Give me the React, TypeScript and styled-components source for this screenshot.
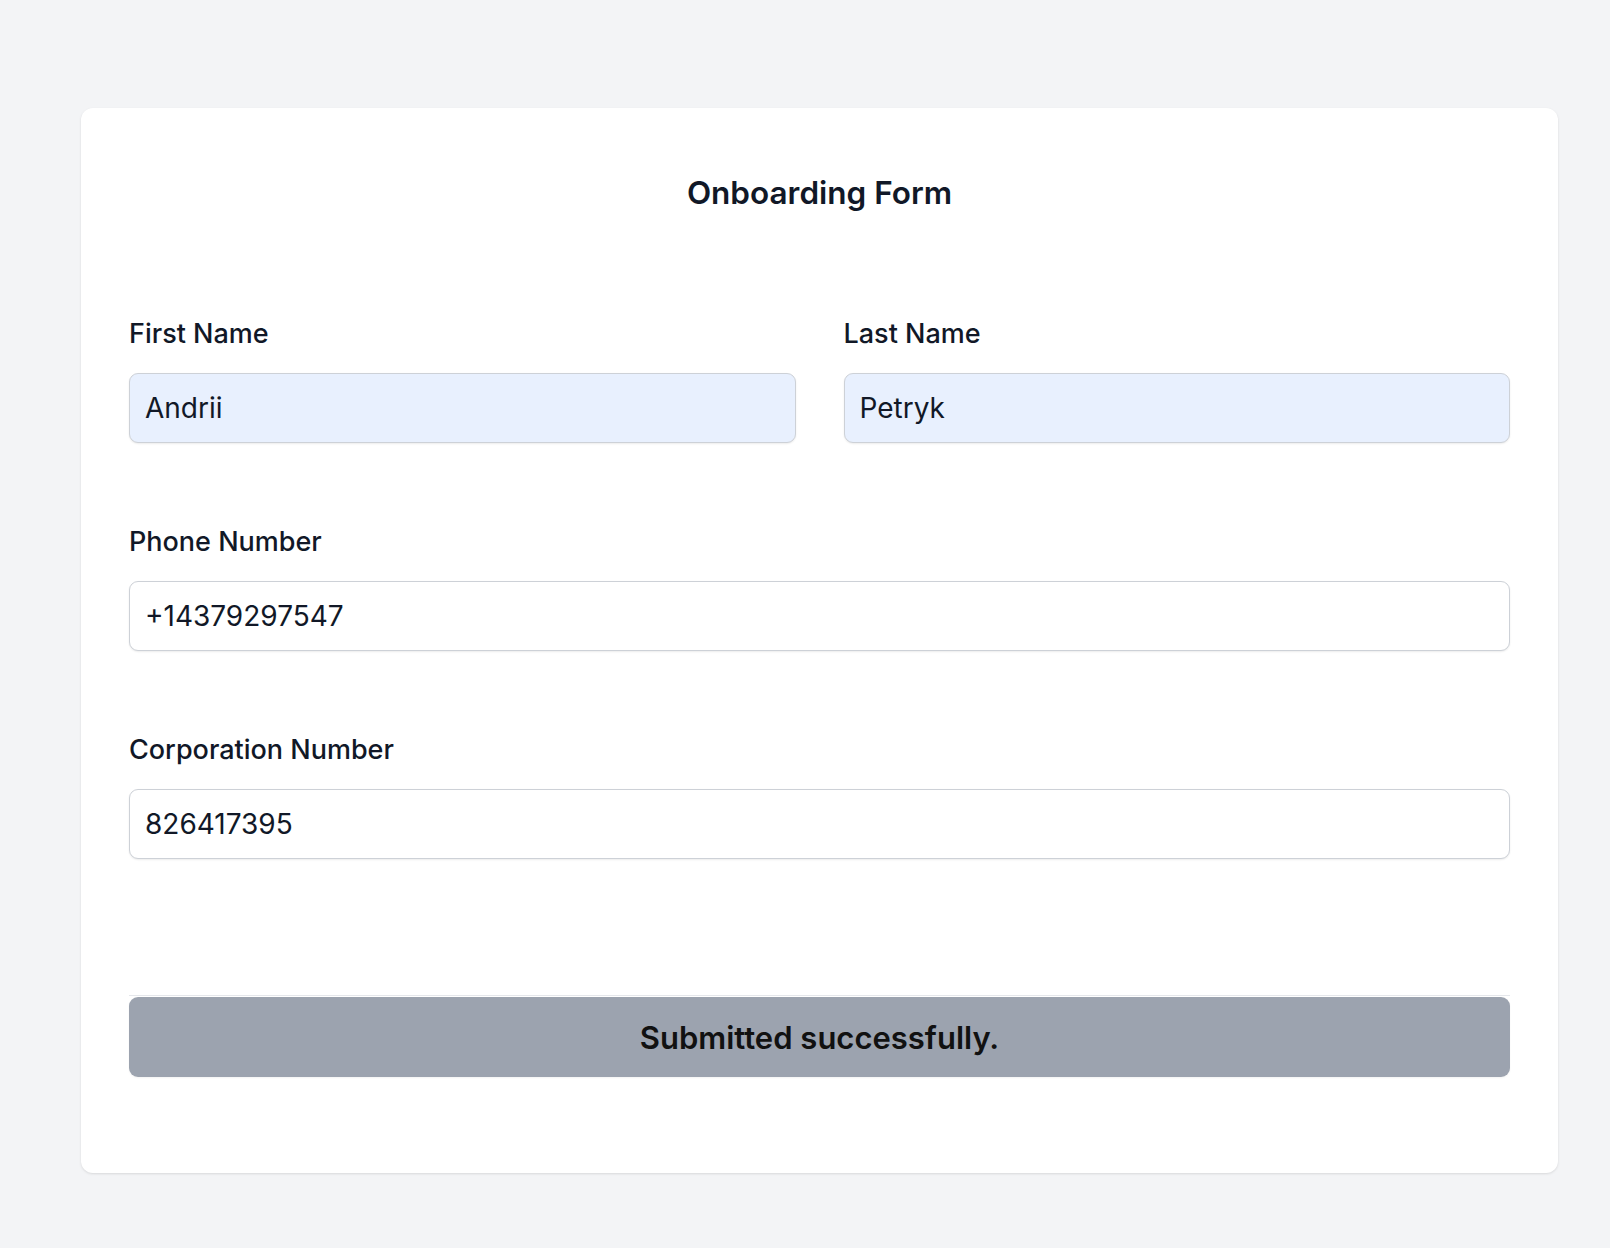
import React from "react";
import styled, { createGlobalStyle } from "styled-components";

const GlobalStyle = createGlobalStyle`
  html, body {
    margin: 0;
    padding: 0;
    background: #f3f4f6;
    font-family: Inter, "Noto Sans", "Liberation Sans", sans-serif;
    color: #111827;
  }
  #root {
    min-height: 100vh;
  }
  * { box-sizing: border-box; }
`;

const Page = styled.div`
  min-height: 1248px;
  padding: 108px 0 0 81px;
`;

const Card = styled.form`
  width: 1477px;
  background: #ffffff;
  border-radius: 12px;
  box-shadow: 0 1px 3px rgba(0, 0, 0, 0.08), 0 1px 2px rgba(0, 0, 0, 0.04);
  padding: 64px 48px 96px;
  display: flex;
  flex-direction: column;
`;

const Title = styled.h1`
  margin: 0 0 99px;
  font-size: 31.5px;
  line-height: 42px;
  font-weight: 600;
  text-align: center;
  color: #111827;
`;

const Fields = styled.div`
  display: flex;
  flex-direction: column;
  gap: 78px;
`;

const Row = styled.div`
  display: grid;
  grid-template-columns: 1fr 1fr;
  gap: 48px;
`;

const Field = styled.div`
  display: flex;
  flex-direction: column;
`;

const Label = styled.label`
  font-size: 27px;
  line-height: 42px;
  font-weight: 500;
  color: #111827;
  margin-bottom: 18px;
`;

const Input = styled.input<{ $autofill?: boolean }>`
  height: 70px;
  width: 100%;
  padding: 0 15px;
  border: 1px solid #cdd1d7;
  border-radius: 9px;
  background: ${(p) => (p.$autofill ? "#e8f0fe" : "#ffffff")};
  box-shadow: 0 1px 2px rgba(0, 0, 0, 0.08);
  font-family: inherit;
  font-size: 28px;
  color: #111827;
  outline: none;
`;

const Footer = styled.div`
  margin-top: 136px;
  border-top: 1px solid #e5e7eb;
  padding-top: 1px;
`;

const SubmitButton = styled.button`
  width: 100%;
  height: 80px;
  border: none;
  border-radius: 9px;
  background: #9ca3af;
  box-shadow: 0 1px 2px rgba(0, 0, 0, 0.05);
  font-family: inherit;
  font-size: 31px;
  font-weight: 600;
  color: #111111;
  cursor: default;
`;

export default function App() {
  return (
    <>
      <GlobalStyle />
      <Page>
        <Card onSubmit={(e) => e.preventDefault()}>
          <Title>Onboarding Form</Title>
          <Fields>
            <Row>
              <Field>
                <Label htmlFor="firstName">First Name</Label>
                <Input id="firstName" $autofill defaultValue="Andrii" />
              </Field>
              <Field>
                <Label htmlFor="lastName">Last Name</Label>
                <Input id="lastName" $autofill defaultValue="Petryk" />
              </Field>
            </Row>
            <Field>
              <Label htmlFor="phone">Phone Number</Label>
              <Input id="phone" defaultValue="+14379297547" />
            </Field>
            <Field>
              <Label htmlFor="corp">Corporation Number</Label>
              <Input id="corp" defaultValue="826417395" />
            </Field>
          </Fields>
          <Footer>
            <SubmitButton type="button">Submitted successfully.</SubmitButton>
          </Footer>
        </Card>
      </Page>
    </>
  );
}
